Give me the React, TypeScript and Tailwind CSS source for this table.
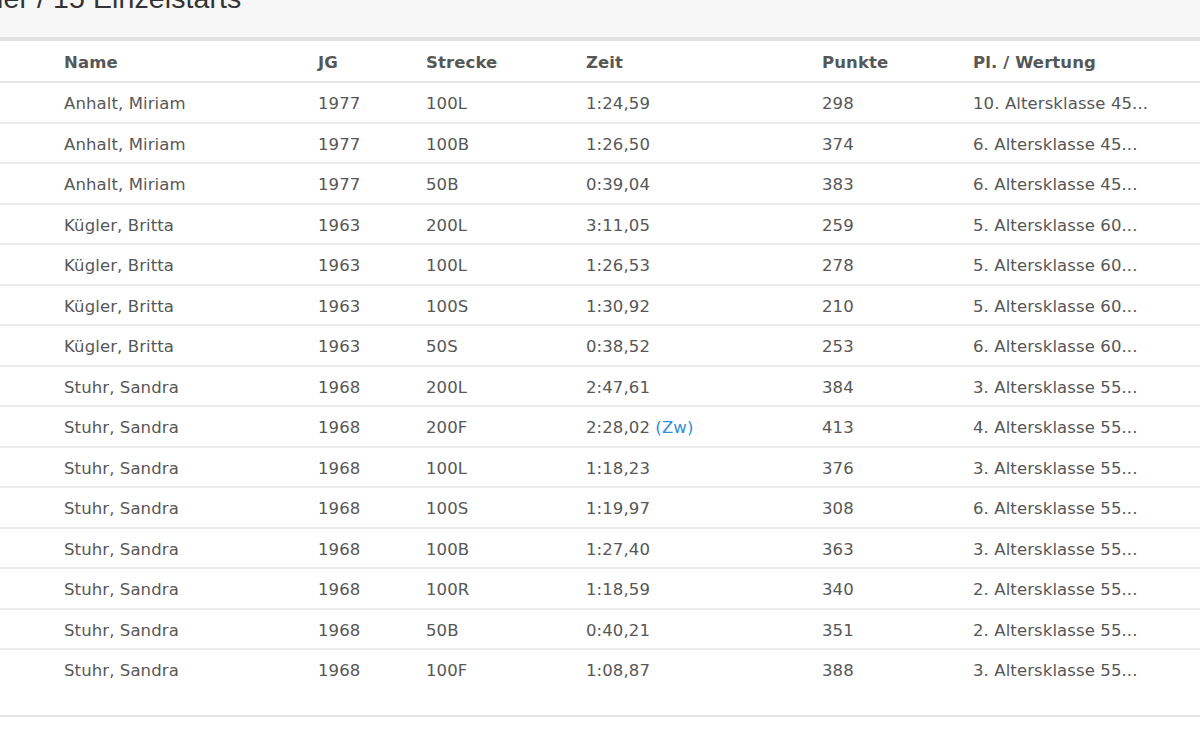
const rows: [string, string, string, string, string, string, boolean?][] = [
  ["Anhalt, Miriam", "1977", "100L", "1:24,59", "298", "10. Altersklasse 45..."],
  ["Anhalt, Miriam", "1977", "100B", "1:26,50", "374", "6. Altersklasse 45..."],
  ["Anhalt, Miriam", "1977", "50B", "0:39,04", "383", "6. Altersklasse 45..."],
  ["Kügler, Britta", "1963", "200L", "3:11,05", "259", "5. Altersklasse 60..."],
  ["Kügler, Britta", "1963", "100L", "1:26,53", "278", "5. Altersklasse 60..."],
  ["Kügler, Britta", "1963", "100S", "1:30,92", "210", "5. Altersklasse 60..."],
  ["Kügler, Britta", "1963", "50S", "0:38,52", "253", "6. Altersklasse 60..."],
  ["Stuhr, Sandra", "1968", "200L", "2:47,61", "384", "3. Altersklasse 55..."],
  ["Stuhr, Sandra", "1968", "200F", "2:28,02", "413", "4. Altersklasse 55...", true],
  ["Stuhr, Sandra", "1968", "100L", "1:18,23", "376", "3. Altersklasse 55..."],
  ["Stuhr, Sandra", "1968", "100S", "1:19,97", "308", "6. Altersklasse 55..."],
  ["Stuhr, Sandra", "1968", "100B", "1:27,40", "363", "3. Altersklasse 55..."],
  ["Stuhr, Sandra", "1968", "100R", "1:18,59", "340", "2. Altersklasse 55..."],
  ["Stuhr, Sandra", "1968", "50B", "0:40,21", "351", "2. Altersklasse 55..."],
  ["Stuhr, Sandra", "1968", "100F", "1:08,87", "388", "3. Altersklasse 55..."],
];

const cols = "grid grid-cols-[64px_254px_108px_160px_236px_151px_1fr] items-center";

export default function App() {
  return (
    <div className="w-[1200px] h-[746px] overflow-hidden bg-white text-[#575757] text-[16.5px] tracking-[0.1px] font-['DejaVu_Sans',Verdana,sans-serif]">
      <div className="h-[41px] bg-[#f7f7f7] border-b-[4px] border-[#e0e0e0] overflow-hidden">
        <h2 className="-mt-[19px] -ml-[3px] text-[28.5px] leading-[34px] text-[#333] font-['Liberation_Sans',Arial,sans-serif] whitespace-nowrap">
          ler / 15 Einzelstarts
        </h2>
      </div>
      <div className={`${cols} h-[42px] pt-[5px] border-b-2 border-[#e6e6e6] font-bold`}>
        <span />
        <span>Name</span>
        <span>JG</span>
        <span>Strecke</span>
        <span>Zeit</span>
        <span>Punkte</span>
        <span>Pl. / Wertung</span>
      </div>
      {rows.map((r, i) => (
        <div
          key={i}
          className={`${cols} ${i === rows.length - 1 ? "h-[67px] items-start pt-[9px] border-b-2 border-[#e6e6e6]" : "h-[40.5px] pt-[5px] border-b-2 border-[#ebebeb]"}`}
        >
          <span />
          <span>{r[0]}</span>
          <span>{r[1]}</span>
          <span>{r[2]}</span>
          <span>
            {r[3]}
            {r[6] && <span className="text-[#2f8fd8]"> (Zw)</span>}
          </span>
          <span>{r[4]}</span>
          <span>{r[5]}</span>
        </div>
      ))}
    </div>
  );
}
